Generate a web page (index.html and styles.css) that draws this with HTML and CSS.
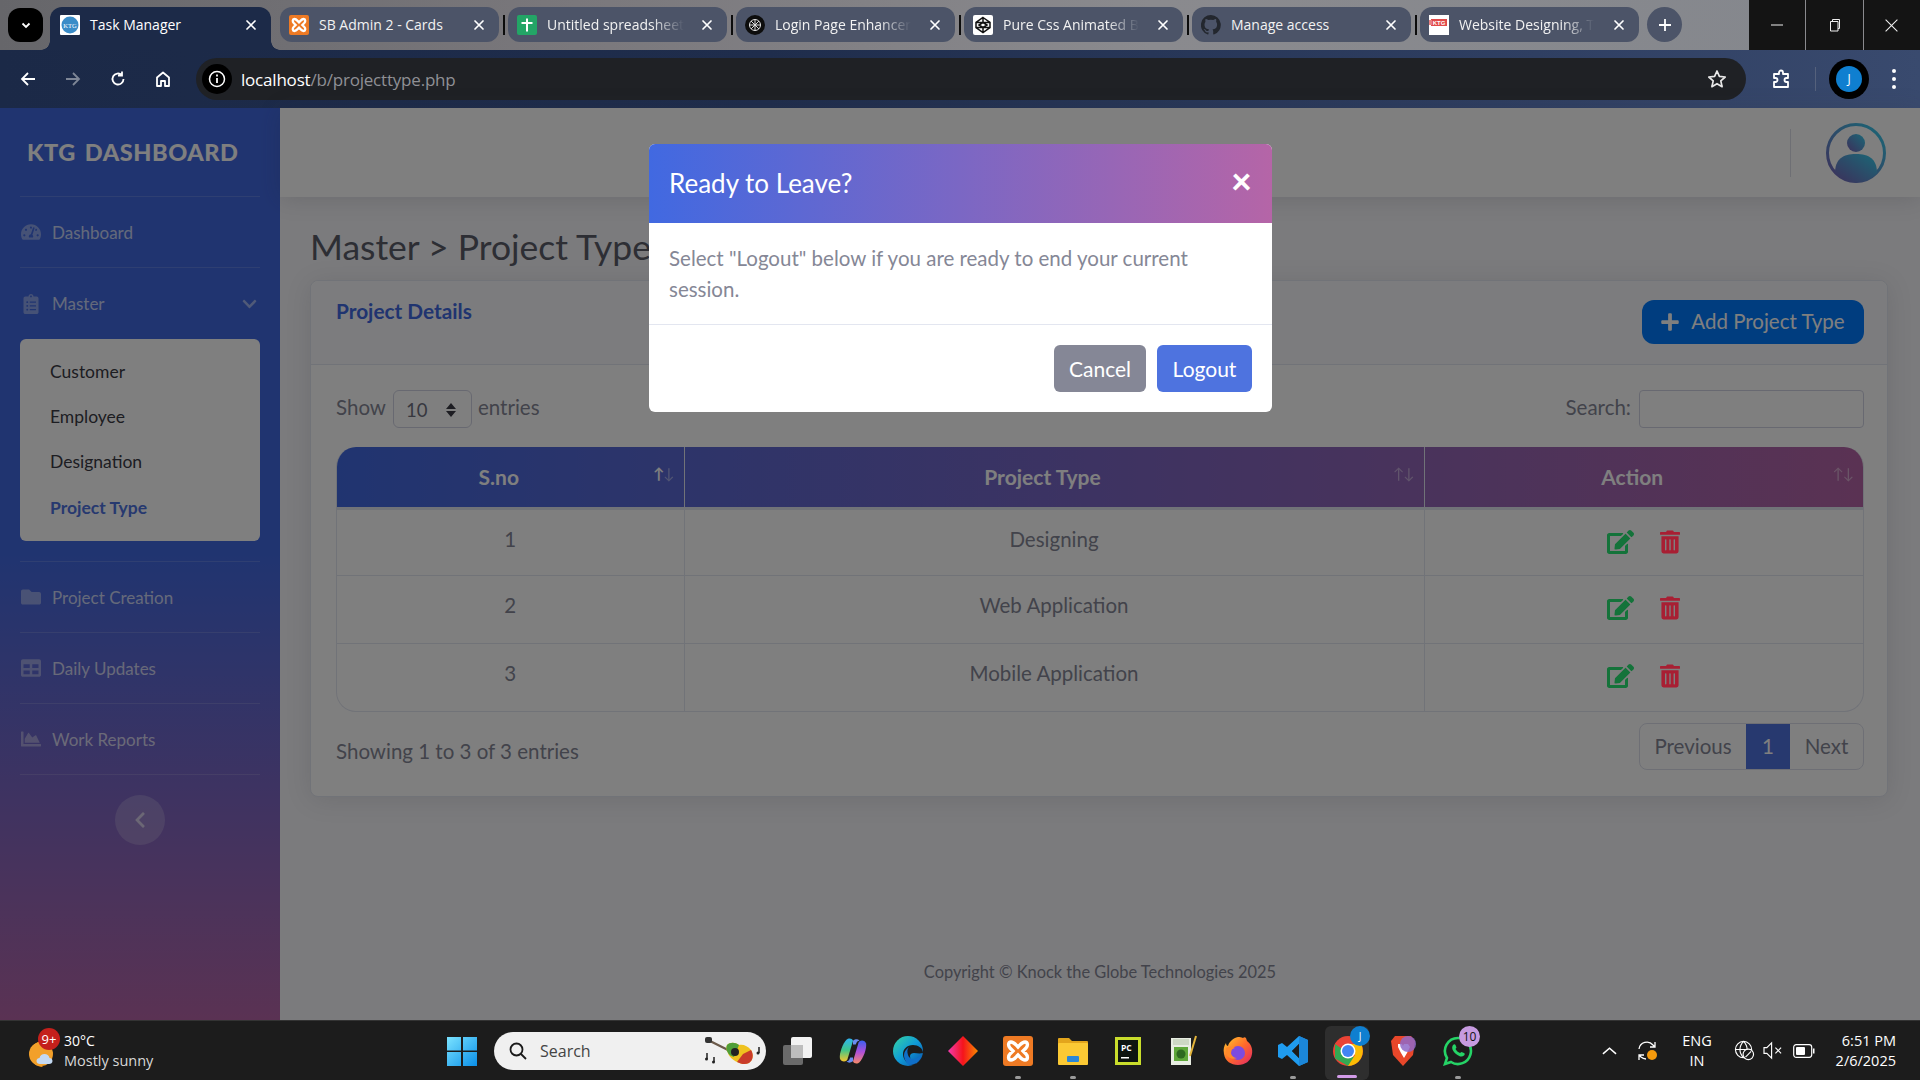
FILE: index.html
```html
<!DOCTYPE html>
<html lang="en">
<head>
<meta charset="utf-8">
<title>Task Manager</title>
<link rel="stylesheet" href="styles.css">
</head>
<body>
<svg class="defs" width="0" height="0" aria-hidden="true">
  <defs>
    <linearGradient id="gAvatar" x1="1" y1="0" x2="0" y2="1"><stop offset="0" stop-color="#35d0ee"/><stop offset="1" stop-color="#7a5fb5"/></linearGradient>
    <linearGradient id="gWin" x1="0" y1="0" x2="1" y2="1"><stop offset="0" stop-color="#7be3ff"/><stop offset="1" stop-color="#0a8fe8"/></linearGradient>
    <linearGradient id="gEdge" x1="0" y1="0" x2="1" y2="1"><stop offset="0" stop-color="#37d6a0"/><stop offset=".5" stop-color="#0f9bd8"/><stop offset="1" stop-color="#0b4fa8"/></linearGradient>
    <linearGradient id="gDia" x1="0" y1="0" x2="1" y2="0"><stop offset="0" stop-color="#f43bb0"/><stop offset=".5" stop-color="#f5141c"/><stop offset="1" stop-color="#f88a00"/></linearGradient>
    <linearGradient id="gCopL" x1="0" y1="0" x2="0" y2="1"><stop offset="0" stop-color="#2fb4f0"/><stop offset=".5" stop-color="#3fc58a"/><stop offset="1" stop-color="#f5c52c"/></linearGradient>
    <linearGradient id="gCopR" x1="0" y1="0" x2="0" y2="1"><stop offset="0" stop-color="#3b5ff0"/><stop offset=".5" stop-color="#b04fd8"/><stop offset="1" stop-color="#f58a6a"/></linearGradient>
    <linearGradient id="gFire" x1="0" y1="0" x2="1" y2="1"><stop offset="0" stop-color="#ffcb2e"/><stop offset=".5" stop-color="#ff6a2a"/><stop offset="1" stop-color="#e0246a"/></linearGradient>
    <symbol id="i-plus" viewBox="0 0 448 512"><path d="M416 208H272V64c0-17.67-14.33-32-32-32h-32c-17.67 0-32 14.33-32 32v144H32c-17.67 0-32 14.33-32 32v32c0 17.67 14.33 32 32 32h144v144c0 17.67 14.33 32 32 32h32c17.67 0 32-14.33 32-32V304h144c17.67 0 32-14.33 32-32v-32c0-17.67-14.33-32-32-32z"/></symbol>
    <symbol id="i-chev-d" viewBox="0 0 448 512"><path d="M207.029 381.476L12.686 187.132c-9.373-9.373-9.373-24.569 0-33.941l22.667-22.667c9.357-9.357 24.522-9.375 33.901-.04L224 284.505l154.745-154.021c9.379-9.335 24.544-9.317 33.901.04l22.667 22.667c9.373 9.373 9.373 24.569 0 33.941L240.971 381.476c-9.373 9.372-24.569 9.372-33.942 0z"/></symbol>
    <symbol id="i-chev-l" viewBox="0 0 320 512"><path d="M34.52 239.03L228.87 44.69c9.37-9.37 24.57-9.37 33.94 0l22.67 22.67c9.36 9.36 9.37 24.52.04 33.9L131.49 256l154.02 154.75c9.34 9.38 9.32 24.54-.04 33.9l-22.67 22.67c-9.37 9.37-24.57 9.37-33.94 0L34.52 272.97c-9.37-9.37-9.37-24.57 0-33.94z"/></symbol>
    <symbol id="i-folder" viewBox="0 0 512 512"><path d="M464 128H272l-64-64H48C21.49 64 0 85.49 0 112v288c0 26.51 21.49 48 48 48h416c26.51 0 48-21.49 48-48V176c0-26.51-21.49-48-48-48z"/></symbol>
    <symbol id="i-table" viewBox="0 0 512 512"><path fill-rule="evenodd" d="M464 32H48C21.49 32 0 53.49 0 80v352c0 26.51 21.49 48 48 48h416c26.51 0 48-21.49 48-48V80c0-26.51-21.49-48-48-48zM224 416H64v-96h160v96zm0-160H64v-96h160v96zm224 160H288v-96h160v96zm0-160H288v-96h160v96z"/></symbol>
    <symbol id="i-area" viewBox="0 0 512 512"><path d="M500 384c6.6 0 12 5.4 12 12v40c0 6.6-5.4 12-12 12H12c-6.6 0-12-5.4-12-12V76c0-6.6 5.4-12 12-12h40c6.6 0 12 5.4 12 12v308h436zM372.7 159.5L288 216l-85.3-113.7c-5.1-6.8-15.5-6.3-19.9 1L96 248v104h384l-89.9-187.8c-3.2-6.5-11.4-8.7-17.4-4.7z"/></symbol>
    <symbol id="i-gauge" viewBox="0 0 576 512"><path d="M288 32C128.94 32 0 160.94 0 320c0 52.8 14.25 102.26 39.06 144.8 5.61 9.62 16.3 15.2 27.44 15.2h443c11.14 0 21.83-5.58 27.44-15.2C561.75 422.26 576 372.8 576 320c0-159.06-128.94-288-288-288zm0 64c14.71 0 26.58 10.13 30.32 23.65-1.11 2.26-2.64 4.23-3.45 6.67l-9.22 27.67c-5.13 3.49-10.97 6.01-17.64 6.01-17.67 0-32-14.33-32-32S270.33 96 288 96zM96 384c-17.67 0-32-14.33-32-32s14.33-32 32-32 32 14.33 32 32-14.33 32-32 32zm48-160c-17.67 0-32-14.33-32-32s14.33-32 32-32 32 14.33 32 32-14.33 32-32 32zm246.77-72.41l-61.33 184C343.13 347.33 352 364.54 352 384c0 11.72-3.38 22.55-8.88 32H232.88c-5.5-9.45-8.88-20.28-8.88-32 0-33.94 26.5-61.43 59.9-63.59l61.34-184.01c4.17-12.56 17.73-19.45 30.36-15.17 12.57 4.19 19.35 17.79 15.17 30.36zm14.66 57.2l15.52-46.55c3.47-1.29 7.13-2.23 11.05-2.23 17.67 0 32 14.33 32 32s-14.33 32-32 32c-11.38-.01-20.89-6.28-26.57-15.22zM480 384c-17.67 0-32-14.33-32-32s14.33-32 32-32 32 14.33 32 32-14.33 32-32 32z"/></symbol>
    <symbol id="i-clip" viewBox="0 0 384 512"><path d="M336 64h-80c0-35.3-28.7-64-64-64s-64 28.7-64 64H48C21.5 64 0 85.5 0 112v352c0 26.5 21.5 48 48 48h288c26.5 0 48-21.5 48-48V112c0-26.5-21.5-48-48-48zM96 424c-13.3 0-24-10.7-24-24s10.7-24 24-24 24 10.7 24 24-10.7 24-24 24zm0-96c-13.3 0-24-10.7-24-24s10.7-24 24-24 24 10.7 24 24-10.7 24-24 24zm0-96c-13.3 0-24-10.7-24-24s10.7-24 24-24 24 10.7 24 24-10.7 24-24 24zm96-192c13.3 0 24 10.7 24 24s-10.7 24-24 24-24-10.7-24-24 10.7-24 24-24zm128 368c0 4.4-3.6 8-8 8H168c-4.4 0-8-3.6-8-8v-16c0-4.4 3.6-8 8-8h144c4.4 0 8 3.6 8 8v16zm0-96c0 4.4-3.6 8-8 8H168c-4.4 0-8-3.6-8-8v-16c0-4.4 3.6-8 8-8h144c4.4 0 8 3.6 8 8v16zm0-96c0 4.4-3.6 8-8 8H168c-4.4 0-8-3.6-8-8v-16c0-4.4 3.6-8 8-8h144c4.4 0 8 3.6 8 8v16z"/></symbol>
    <symbol id="i-edit" viewBox="0 0 576 512"><path d="M402.6 83.2l90.2 90.2c3.8 3.8 3.8 10 0 13.8L274.4 405.6l-92.8 10.3c-12.4 1.4-22.9-9.1-21.5-21.5l10.3-92.8L388.8 83.2c3.8-3.8 10-3.8 13.8 0zm162-22.9l-48.8-48.8c-15.2-15.2-39.9-15.2-55.2 0l-35.4 35.4c-3.8 3.8-3.8 10 0 13.8l90.2 90.2c3.8 3.8 10 3.8 13.8 0l35.4-35.4c15.2-15.3 15.2-40 0-55.2zM384 346.2V448H64V128h229.8c3.2 0 6.2-1.3 8.5-3.5l40-40c7.6-7.6 2.2-20.5-8.5-20.5H48C21.5 64 0 85.5 0 112v352c0 26.5 21.5 48 48 48h352c26.5 0 48-21.5 48-48V306.2c0-10.7-12.9-16-20.5-8.5l-40 40c-2.2 2.3-3.5 5.3-3.5 8.5z"/></symbol>
    <symbol id="i-trash" viewBox="0 0 448 512"><path d="M32 464a48 48 0 0 0 48 48h288a48 48 0 0 0 48-48V128H32zm272-256a16 16 0 0 1 32 0v224a16 16 0 0 1-32 0zm-96 0a16 16 0 0 1 32 0v224a16 16 0 0 1-32 0zm-96 0a16 16 0 0 1 32 0v224a16 16 0 0 1-32 0zM432 32H312l-9.4-18.7A24 24 0 0 0 281.1 0H166.8a23.72 23.72 0 0 0-21.4 13.3L136 32H16A16 16 0 0 0 0 48v32a16 16 0 0 0 16 16h416a16 16 0 0 0 16-16V48a16 16 0 0 0-16-16z"/></symbol>
    <symbol id="i-x" viewBox="0 0 12 12"><path d="M2 2l8 8M10 2l-8 8" fill="none" stroke="currentColor" stroke-width="1.7" stroke-linecap="round"/></symbol>
    <symbol id="f-ktg" viewBox="0 0 20 20"><rect width="20" height="20" rx="1" fill="#fff"/><circle cx="10" cy="10" r="8.5" fill="#3a8cc8"/><text x="10" y="12.5" font-size="6.5" font-family="Liberation Serif" fill="#fff" text-anchor="middle">KTG</text></symbol>
    <symbol id="f-xampp" viewBox="0 0 30 30"><rect width="30" height="30" rx="3" fill="#ee7a24"/><path d="M8 6c3 0 4 2 7 5 3-3 4-5 7-5 3 0 3 4 1 6l-3 3 3 3c2 2 2 6-1 6-3 0-4-2-7-5-3 3-4 5-7 5-3 0-3-4-1-6l3-3-3-3C5 10 5 6 8 6z" fill="none" stroke="#fff" stroke-width="3.4"/></symbol>
    <symbol id="f-sheet" viewBox="0 0 20 20"><rect width="20" height="20" rx="2" fill="#23a566"/><path d="M10 3.5v13M4.5 8h11" stroke="#fff" stroke-width="2"/></symbol>
    <symbol id="f-gpt" viewBox="0 0 20 20"><circle cx="10" cy="10" r="10" fill="#0d0d0d"/><g fill="none" stroke="#ddd" stroke-width="1"><circle cx="10" cy="10" r="5.5"/><path d="M6 6l8 8M14 6l-8 8M10 4v12M4 10h12"/></g></symbol>
    <symbol id="f-pen" viewBox="0 0 20 20"><rect width="20" height="20" rx="2" fill="#fff"/><path d="M10 2.5l7 5v5l-7 5-7-5v-5zM10 2.5v5l-7 0M10 7.5l7 0M10 12.5v5M3 12.5h14M10 7.5l-4 2.5 4 2.5 4-2.5z" fill="none" stroke="#111" stroke-width="1.5"/></symbol>
    <symbol id="f-git" viewBox="0 0 20 20"><path d="M10 0a10 10 0 0 0-3.2 19.5c.5.1.7-.2.7-.5v-1.7c-2.8.6-3.4-1.3-3.4-1.3-.5-1.2-1.100-1.500-1.100-1.500-.9-.6.1-.6.1-.6 1 .1 1.500 1 1.500 1 .9 1.500 2.300 1.100 2.900.8.1-.6.3-1.100.6-1.300-2.200-.3-4.600-1.100-4.600-4.900 0-1.100.4-2 1-2.700-.1-.3-.4-1.300.1-2.700 0 0 .8-.3 2.700 1a9.400 9.400 0 0 1 5 0c1.900-1.300 2.700-1 2.700-1 .5 1.400.2 2.400.1 2.700.6.7 1 1.600 1 2.700 0 3.800-2.300 4.600-4.600 4.900.4.3.7.9.7 1.900V19c0 .3.2.6.7.5A10 10 0 0 0 10 0z" fill="#23272e"/></symbol>
    <symbol id="f-red" viewBox="0 0 20 20"><rect width="20" height="20" fill="#fff"/><rect x="2" y="4" width="16" height="7" fill="#e14a4a"/><text x="10" y="10" font-size="6" font-family="Liberation Sans" font-weight="700" fill="#fff" text-anchor="middle">KTG</text><rect x="0" y="5" width="3" height="5" fill="#e98080"/></symbol>
  </defs>
</svg>

<div class="window">
  <header class="tabstrip">
    <button class="tabsearch"><svg viewBox="0 0 12 12" width="12" height="12"><path d="M2.5 4.5L6 8l3.500-3.500" fill="none" stroke="#fff" stroke-width="1.800"/></svg></button>
    <div class="tabs">
      <div class="tab tab-active"><svg class="fav"><use href="#f-ktg"/></svg><span class="tab-title">Task Manager</span><svg class="tab-x"><use href="#i-x"/></svg></div>
      <div class="tab"><svg class="fav"><use href="#f-xampp"/></svg><span class="tab-title">SB Admin 2 - Cards</span><svg class="tab-x"><use href="#i-x"/></svg></div>
      <div class="tab"><svg class="fav"><use href="#f-sheet"/></svg><span class="tab-title tab-fade">Untitled spreadsheet</span><svg class="tab-x"><use href="#i-x"/></svg></div>
      <div class="tab"><svg class="fav"><use href="#f-gpt"/></svg><span class="tab-title tab-fade">Login Page Enhancer</span><svg class="tab-x"><use href="#i-x"/></svg></div>
      <div class="tab"><svg class="fav"><use href="#f-pen"/></svg><span class="tab-title tab-fade">Pure Css Animated B</span><svg class="tab-x"><use href="#i-x"/></svg></div>
      <div class="tab"><svg class="fav"><use href="#f-git"/></svg><span class="tab-title">Manage access</span><svg class="tab-x"><use href="#i-x"/></svg></div>
      <div class="tab"><svg class="fav"><use href="#f-red"/></svg><span class="tab-title tab-fade">Website Designing, T</span><svg class="tab-x"><use href="#i-x"/></svg></div>
    </div>
    <button class="newtab"><svg viewBox="0 0 14 14" width="14" height="14"><path d="M7 1v12M1 7h12" stroke="#fff" stroke-width="1.800"/></svg></button>
    <div class="winctl">
      <span class="wc"><svg viewBox="0 0 14 14" width="14" height="14"><path d="M1 7h12" stroke="#eee" stroke-width="1"/></svg></span>
      <span class="wc wc-mid"><svg viewBox="0 0 14 14" width="14" height="14"><path d="M3.5 3.5h7.500v9.500H3.500zM5.500 3.500V1.500h7v9h-1.500" fill="none" stroke="#eee" stroke-width="1"/></svg></span>
      <span class="wc"><svg viewBox="0 0 14 14" width="15" height="15"><path d="M1.5 1.500l11 11M12.500 1.500l-11 11" stroke="#eee" stroke-width="1"/></svg></span>
    </div>
  </header>

  <nav class="toolbar">
    <span class="tb-btn"><svg viewBox="0 0 18 18" width="18" height="18"><path d="M16 9H3M9 3L3 9l6 6" fill="none" stroke="#fff" stroke-width="1.800"/></svg></span>
    <span class="tb-btn"><svg viewBox="0 0 18 18" width="18" height="18"><path d="M2 9h13M9 3l6 6-6 6" fill="none" stroke="#7e8696" stroke-width="1.800"/></svg></span>
    <span class="tb-btn"><svg viewBox="0 0 18 18" width="18" height="18"><path d="M14.5 9a5.500 5.500 0 1 1-1.700-4M13 1.500V5.500H9" fill="none" stroke="#fff" stroke-width="1.800"/></svg></span>
    <span class="tb-btn"><svg viewBox="0 0 18 18" width="18" height="18"><path d="M3 16V7.500L9 2.500l6 5V16h-4v-5H7v5z" fill="none" stroke="#fff" stroke-width="1.800" stroke-linejoin="round"/></svg></span>
    <div class="omnibox">
      <span class="site-info"><svg viewBox="0 0 18 18" width="18" height="18"><circle cx="9" cy="9" r="7.500" fill="none" stroke="#fff" stroke-width="1.500"/><path d="M9 8v5M9 4.500v2" stroke="#fff" stroke-width="1.800"/></svg></span>
      <span class="url"><span class="url-host">localhost</span>/b/projecttype.php</span>
      <svg class="star" viewBox="0 0 20 20" width="20" height="20"><path d="M10 2l2.400 5.400 5.800.6-4.400 3.900 1.300 5.800L10 14.700l-5.100 3 1.300-5.800L1.800 8l5.800-.6z" fill="none" stroke="#e8e8e8" stroke-width="1.700" stroke-linejoin="round"/></svg>
    </div>
    <span class="tb-ext"><svg viewBox="0 0 20 20" width="20" height="20"><path d="M8 3.500a2 2 0 0 1 4 0V5h5v4h-1.500a2 2 0 0 0 0 4H17v5H3v-5h1.500a2 2 0 0 0 0-4H3V5h5z" fill="none" stroke="#fff" stroke-width="1.800" stroke-linejoin="round"/></svg></span>
    <span class="tb-sep"></span>
    <span class="profile"><span class="profile-in">J</span></span>
    <span class="tb-dots"><i></i><i></i><i></i></span>
  </nav>

  <div class="app">
    <aside class="sidebar">
      <div class="brand">KTG DASHBOARD</div>
      <ul class="nav">
        <li class="nav-item"><svg class="nav-ic"><use href="#i-gauge"/></svg><span>Dashboard</span></li>
        <li class="nav-item nav-open"><svg class="nav-ic"><use href="#i-clip"/></svg><span>Master</span><svg class="nav-chev"><use href="#i-chev-d"/></svg></li>
        <li class="submenu">
          <a>Customer</a><a>Employee</a><a>Designation</a><a class="sub-active">Project Type</a>
        </li>
        <li class="nav-item"><svg class="nav-ic"><use href="#i-folder"/></svg><span>Project Creation</span></li>
        <li class="nav-item"><svg class="nav-ic"><use href="#i-table"/></svg><span>Daily Updates</span></li>
        <li class="nav-item"><svg class="nav-ic"><use href="#i-area"/></svg><span>Work Reports</span></li>
      </ul>
      <button class="collapse"><svg width="12" height="18"><use href="#i-chev-l"/></svg></button>
    </aside>

    <main class="main">
      <div class="topbar">
        <span class="topbar-sep"></span>
        <svg class="avatar" viewBox="0 0 60 60" width="60" height="60">
          <circle cx="30" cy="30" r="28.5" fill="none" stroke="url(#gAvatar)" stroke-width="3"/>
          <circle cx="30" cy="20" r="9" fill="url(#gAvatar)"/>
          <path d="M9 50c0-14 8-19 21-19s21 5 21 19a28 28 0 0 1-42 0z" fill="url(#gAvatar)"/>
        </svg>
      </div>
      <section class="content">
        <h1 class="page-title">Master &gt; Project Type</h1>
        <div class="card">
          <div class="card-head">
            <h2 class="card-title">Project Details</h2>
            <button class="btn-add"><svg width="18" height="20"><use href="#i-plus"/></svg><span>Add Project Type</span></button>
          </div>
          <div class="card-body">
            <div class="dt-top">
              <div class="dt-len">Show <span class="dt-select"><span>10</span><svg viewBox="0 0 10 14" width="10" height="14"><path d="M5 0l5 6H0zM5 14L0 8h10z"/></svg></span> entries</div>
              <label class="dt-search">Search: <input type="text"></label>
            </div>
            <div class="table-wrap">
              <table class="dt">
                <colgroup><col class="c1"><col class="c2"><col class="c3"></colgroup>
                <thead>
                  <tr>
                    <th>S.no<span class="sort sort-on"><b>↑</b><i>↓</i></span></th>
                    <th>Project Type<span class="sort"><i>↑</i><i>↓</i></span></th>
                    <th>Action<span class="sort"><i>↑</i><i>↓</i></span></th>
                  </tr>
                </thead>
                <tbody>
                  <tr><td>1</td><td>Designing</td><td class="act"><svg class="ic-edit"><use href="#i-edit"/></svg><svg class="ic-trash"><use href="#i-trash"/></svg></td></tr>
                  <tr><td>2</td><td>Web Application</td><td class="act"><svg class="ic-edit"><use href="#i-edit"/></svg><svg class="ic-trash"><use href="#i-trash"/></svg></td></tr>
                  <tr><td>3</td><td>Mobile Application</td><td class="act"><svg class="ic-edit"><use href="#i-edit"/></svg><svg class="ic-trash"><use href="#i-trash"/></svg></td></tr>
                </tbody>
              </table>
            </div>
            <div class="dt-bottom">
              <div class="dt-info">Showing 1 to 3 of 3 entries</div>
              <div class="pager"><a class="pg-prev">Previous</a><a class="pg-num">1</a><a class="pg-next">Next</a></div>
            </div>
          </div>
        </div>
      </section>
      <footer class="footer">Copyright © Knock the Globe Technologies 2025</footer>
    </main>

    <div class="backdrop"></div>
    <div class="modal">
      <div class="modal-head"><h3>Ready to Leave?</h3><span class="modal-x">×</span></div>
      <div class="modal-body">Select "Logout" below if you are ready to end your current session.</div>
      <div class="modal-foot"><button class="btn-cancel">Cancel</button><button class="btn-logout">Logout</button></div>
    </div>
  </div>

  <footer class="taskbar">
    <div class="weather">
      <svg class="wx" viewBox="0 0 30 28" width="30" height="28"><path d="M16 1a13 13 0 1 0 0 26 13 13 0 0 1-4-14 13 13 0 0 1 8-11z" fill="#f59a1c"/><circle cx="14" cy="14" r="12" fill="#f2a02a"/><path d="M13 24c-2 0-3.500-1-3.500-3s1.500-3 3-3c.5-2.500 2.500-4 5-4s4.500 1.500 5 4c1.500 0 3 1 3 3s-1.500 3-3.500 3z" fill="#c4d9f2"/></svg>
      <span class="wx-badge">9+</span>
      <div class="wx-text"><span class="wx-temp">30°C</span><span class="wx-desc">Mostly sunny</span></div>
    </div>
    <svg class="winlogo" viewBox="0 0 30 30" width="30" height="30"><path d="M0 1h14v13.500H0zM16 1h14v13.500H16zM0 16h14v14H0zM16 16h14v14H16z" fill="url(#gWin)"/></svg>
    <div class="tsearch">
      <svg viewBox="0 0 18 18" width="18" height="18"><circle cx="7.5" cy="7.5" r="6" fill="none" stroke="#1a1a1a" stroke-width="1.800"/><path d="M12 12l5 5" stroke="#1a1a1a" stroke-width="1.800"/></svg>
      <span>Search</span>
      <svg class="guitar" viewBox="0 0 56 28" width="56" height="28">
        <path d="M3 3l24 12" stroke="#6b5a4a" stroke-width="2.200"/><rect x="0" y="0" width="7" height="6" rx="2" fill="#333"/>
        <path d="M22 8c3-3 8-3 12 0 4-1 9 1 12 5 3 5 2 10-2 13-4 2-8 1-12-1-4-2-8-5-9-9-2-3-2-6-1-8z" fill="#efc21f"/>
        <path d="M22 8c3-3 8-3 12 0l-5 12c-3-1-5-2-6-4-2-3-2-6-1-8z" fill="#4f9e38"/>
        <path d="M32 25c4 2 8 3 12 1 4-3 5-8 2-13l-8 4z" fill="#c93b2a"/>
        <circle cx="30" cy="15" r="4" fill="#222"/>
        <path d="M2 16v6M9 20v5" stroke="#222" stroke-width="1.500"/><circle cx="1.500" cy="22" r="1.500" fill="#222"/><circle cx="8.500" cy="25" r="1.500" fill="#222"/>
        <path d="M54 10v6" stroke="#222" stroke-width="1.500"/><circle cx="53" cy="16" r="1.500" fill="#222"/>
      </svg>
    </div>
    <div class="apps">
      <span class="app-ic"><svg viewBox="0 0 30 30" width="30" height="30"><rect x="0" y="9" width="20" height="20" rx="2" fill="#6a6a6a"/><rect x="8" y="1" width="21" height="21" rx="2" fill="#f2f2f2"/><rect x="8" y="9" width="12" height="13" fill="#bdbdbd"/></svg></span>
      <span class="app-ic"><svg viewBox="0 0 30 30" width="28" height="30"><path d="M8 3c2-2 6-2 7 1l-6 20c-1 3-7 3-8-1C0 18 4 7 8 3z" fill="url(#gCopL)"/><path d="M22 27c-2 2-6 2-7-1l6-20c1-3 7-3 8 1 1 5-3 16-7 20z" fill="url(#gCopR)"/><path d="M15 4c3-2 5-2 7 0-2 0-3 1-4 4l-3 0zM15 26c-3 2-5 2-7 0 2 0 3-1 4-4l3 0z" fill="#6a8cf0"/></svg></span>
      <span class="app-ic"><svg viewBox="0 0 30 30" width="30" height="30"><circle cx="15" cy="15" r="15" fill="url(#gEdge)"/><path d="M30 17c0-5-5-8-10-8-6 0-10 4-10 9 0 6 5 11 11 11 3-1 2-2 0-3-3-1-4-3-4-6 0-2 2-3 4-3 3 0 5 1 9 0z" fill="#1c1c1c"/><path d="M28 20c-1 5-6 9-11 9-3-1-6-5-6-10 0-3 2-6 5-8-2 2-2 5-1 8 1 4 6 6 13 1z" fill="#0f6fc8"/></svg></span>
      <span class="app-ic"><svg viewBox="0 0 30 30" width="30" height="30"><path d="M15 0l15 15-15 15L0 15z" fill="url(#gDia)"/></svg></span>
      <span class="app-ic app-run"><svg width="30" height="30"><use href="#f-xampp"/></svg></span>
      <span class="app-ic app-run"><svg viewBox="0 0 30 30" width="30" height="30"><path d="M0 3a1 1 0 0 1 1-1h10l3 3h15a1 1 0 0 1 1 1v3H0z" fill="#e3a51c"/><rect y="7" width="30" height="22" rx="1" fill="#fbc934"/><rect x="9" y="20" width="12" height="6" rx="1" fill="#2a87d8"/></svg></span>
      <span class="app-ic"><svg viewBox="0 0 26 30" width="26" height="30"><rect width="26" height="28" y="1" fill="#c9dd2c"/><rect x="3" y="4" width="20" height="22" fill="#0e1410"/><text class="pc" x="6" y="15">PC</text><rect x="6" y="21" width="8" height="1.5" fill="#fff"/></svg></span>
      <span class="app-ic"><svg viewBox="0 0 28 32" width="28" height="32"><path d="M2 3h20v27H2z" fill="#e8ede2"/><path d="M5 12h14v14H5z" fill="#5fa83a"/><circle cx="12" cy="19" r="4.5" fill="#2e6a20"/><path d="M4 4h16v6H4z" fill="#cdd8c4"/><path d="M21 21l6-20" stroke="#e4b53c" stroke-width="2"/></svg></span>
      <span class="app-ic"><svg viewBox="0 0 30 30" width="30" height="30"><path d="M15 1c2 0 3 0 5 1 1-1 2-1 3 0l1 3c4 3 6 8 5 13-1 7-7 11-14 11S2 25 1 18C0 13 1 10 3 7c0 2 1 3 2 3 1-4 5-8 10-9z" fill="url(#gFire)"/><circle cx="15" cy="17" r="7" fill="#7d4be0"/><path d="M3 12c3-2 6-2 9 0-4 1-5 3-4 6 1 2 3 4 6 4-4 2-9 0-11-4z" fill="#ff8a2a"/></svg></span>
      <span class="app-ic app-run"><svg viewBox="0 0 30 30" width="30" height="30"><path d="M21 0l9 4v22l-9 4-12-11-5 4-4-2V9l4-2 5 4zM21 8l-7 7 7 7z" fill="#1f9cf0"/><path d="M21 0l9 4v22l-9 4z" fill="#1b86d8"/><path d="M21 8l-7 7 7 7z" fill="#1c1c1c"/></svg></span>
      <span class="app-ic app-chrome">
        <svg viewBox="0 0 30 30" width="30" height="30"><circle cx="15" cy="15" r="15" fill="#ea4335"/><path d="M2 8v14.5L15 30l7-8z" fill="#34a853"/><path d="M15 8h13.100A15 15 0 0 1 15 30l7-11z" fill="#fbbc04"/><circle cx="15" cy="15" r="7.500" fill="#fff"/><circle cx="15" cy="15" r="6" fill="#4285f4"/></svg>
        <span class="chrome-j">J</span>
      </span>
      <span class="app-ic"><svg viewBox="0 0 28 32" width="28" height="32"><path d="M6 1h16l4 5-2 14-10 11L4 20 2 6z" fill="#e8472a"/><path d="M9 9h4l1 2 1-2h4l2 3-3 6-3 5-3-5-3-6z" fill="#fff"/><circle cx="19" cy="9" r="8" fill="#8f6ac9" opacity=".85"/></svg></span>
      <span class="app-ic app-run app-wa"><svg viewBox="0 0 30 30" width="30" height="30"><path d="M15 2a13 13 0 0 0-11 20L2 28l6-2a13 13 0 1 0 7-24z" fill="none" stroke="#25d366" stroke-width="2.6"/><path d="M10 9c1-1 2-1 2.500 0l1 2.500-1 1.500c1 2 2.500 3 4.500 4l1.500-1 2.500 1c1 .5 1 1.500 0 2.500-2 2-5 1-8-1.500S8 12 10 9z" fill="#25d366"/></svg><span class="wa-badge">10</span></span>
    </div>
    <div class="tray">
      <span class="tr-chev"><svg viewBox="0 0 16 10" width="15" height="10"><path d="M1 8l7-6 7 6" fill="none" stroke="#fff" stroke-width="1.600"/></svg></span>
      <span class="tr-sync"><svg viewBox="0 0 22 22" width="22" height="22"><path d="M2 9a8 8 0 0 1 14-4l2 2M18 2v5h-5M2 15l2 2a8 8 0 0 0 5 2M2 20v-5h5" fill="none" stroke="#fff" stroke-width="1.300"/><circle cx="15" cy="15" r="5" fill="#f59a0c"/></svg></span>
      <span class="tr-lang"><span>ENG</span><span>IN</span></span>
      <span class="tr-ic"><svg viewBox="0 0 22 22" width="21" height="21"><circle cx="10" cy="10" r="8.500" fill="none" stroke="#fff" stroke-width="1.200"/><path d="M1.500 10h17M10 1.500c-5 5-5 12 0 17M10 1.500c5 5 5 12 0 17" fill="none" stroke="#fff" stroke-width="1.200"/><circle cx="15" cy="15" r="5.500" fill="#1c1c1c" stroke="#fff" stroke-width="1.200"/><path d="M12 18l6-6" stroke="#fff" stroke-width="1.200"/></svg></span>
      <span class="tr-ic"><svg viewBox="0 0 22 20" width="21" height="19"><path d="M1 7h3l5-5v16l-5-5H1z" fill="none" stroke="#fff" stroke-width="1.200"/><path d="M13 7l6 6M19 7l-6 6" stroke="#fff" stroke-width="1.200"/></svg></span>
      <span class="tr-ic tr-batt"><svg viewBox="0 0 22 14" width="22" height="14"><rect x=".7" y=".7" width="18" height="12.6" rx="2.500" fill="none" stroke="#fff" stroke-width="1.200"/><rect x="3" y="3" width="9" height="8" rx="1" fill="#fff"/><rect x="20" y="4.500" width="1.500" height="5" fill="#fff"/></svg></span>
      <span class="tr-time"><span>6:51 PM</span><span>2/6/2025</span></span>
    </div>
  </footer>
</div>
</body>
</html>
```

FILE: styles.css
```css
* { box-sizing: border-box; }
html, body { margin: 0; padding: 0; height: 100%; overflow: hidden; }
body { font-family: "Lato", "Noto Sans", sans-serif; background: #000; }
button { font-family: inherit; border: 0; padding: 0; cursor: pointer; }
h1, h2, h3 { margin: 0; font-weight: 400; }
ul { list-style: none; margin: 0; padding: 0; }
.defs { position: absolute; }
.window { display: flex; flex-direction: column; width: 1920px; height: 1080px; }

/* browser tab strip */
.tabstrip { height: 50px; flex: none; display: flex; align-items: flex-start; padding-left: 8px; background: linear-gradient(90deg, #66666a 0, #7a787c 30%, #8a8a8e 60%, #84878d 100%); font-family: "Open Sans", sans-serif; }
.tabsearch { width: 35px; height: 34px; margin-top: 8px; background: #000; border-radius: 12px; display: flex; align-items: center; justify-content: center; }
.tabs { display: flex; gap: 9px; margin-left: 7px; }
.tab { position: relative; width: 219px; height: 35px; margin-top: 7px; background: #4c5468; border-radius: 12px; display: flex; align-items: center; padding: 0 14px 0 9px; color: #f2f2f2; font-size: 14px; }
.tab + .tab::before { content: ""; position: absolute; left: -5px; top: 8px; width: 2px; height: 20px; background: #0c0c0c; }
.tab-active + .tab::before { display: none; }
.tab-active { width: 221px; height: 43px; background: #1c2a48; border-radius: 12px 12px 0 0; padding: 0 14px 8px 10px; color: #fff; }
.tab-active::before, .tab-active::after { content: ""; position: absolute; bottom: 0; width: 9px; height: 9px; }
.tab-active::before { left: -9px; background: radial-gradient(circle at 0 0, transparent 8.5px, #1c2a48 9px); }
.tab-active::after { right: -9px; background: radial-gradient(circle at 100% 0, transparent 8.5px, #1c2a48 9px); }
.fav { width: 20px; height: 20px; flex: none; margin-right: 10px; }
.tab-title { flex: none; white-space: nowrap; }
.tab-fade { -webkit-mask-image: linear-gradient(90deg, #000 calc(100% - 32px), transparent 100%); mask-image: linear-gradient(90deg, #000 calc(100% - 32px), transparent 100%); }
.tab-x { width: 12px; height: 12px; flex: none; margin-left: auto; color: #fff; }
.newtab { width: 35px; height: 35px; margin: 7px 0 0 8px; background: #4c5468; border-radius: 50%; display: flex; align-items: center; justify-content: center; }
.winctl { margin-left: auto; width: 171px; height: 50px; background: #141414; display: flex; }
.wc { flex: 1; display: flex; align-items: center; justify-content: center; }
.wc-mid { border-left: 1px solid #8a8a8e; border-right: 1px solid #8a8a8e; }

/* browser toolbar */
.toolbar { height: 58px; flex: none; display: flex; align-items: center; background: linear-gradient(90deg, #1b2947 0, #1f2d4c 40%, #2f3f62 80%, #394a6e 100%); padding-left: 5px; }
.tb-btn { width: 45px; height: 40px; display: flex; align-items: center; justify-content: center; }
.omnibox { flex: none; width: 1550px; height: 42px; margin-left: 11px; background: #1f2125; border-radius: 21px; display: flex; align-items: center; padding: 0 19px 0 6px; }
.site-info { width: 30px; height: 30px; background: #000; border-radius: 50%; display: flex; align-items: center; justify-content: center; }
.url { margin-left: 9px; color: #8f9095; font: 17px "Open Sans", sans-serif; letter-spacing: -.2px; }
.url-host { color: #fff; }
.star { margin-left: auto; }
.tb-ext { width: 20px; margin-left: 25px; display: flex; }
.tb-sep { width: 1px; height: 24px; background: #55617c; margin-left: 24px; }
.profile { width: 40px; height: 40px; margin-left: 13px; border-radius: 50%; background: #000; display: flex; align-items: center; justify-content: center; }
.profile-in { width: 26px; height: 26px; border-radius: 50%; background: #0f7fd0; color: #fff; font: 12px/26px "Open Sans", sans-serif; text-align: center; }
.tb-dots { display: flex; flex-direction: column; gap: 4px; margin-left: 23px; }
.tb-dots i { width: 4px; height: 4px; border-radius: 50%; background: #fff; }

/* application */
.app { position: relative; flex: 1; min-height: 0; display: flex; background: #f6f6fa; }
.sidebar { width: 280px; flex: none; padding: 0 20px; display: flex; flex-direction: column; background: linear-gradient(180deg, #4169e1 0, #4169e1 49%, #b565a7 100%); color: #fff; }
.brand { height: 89px; display: flex; align-items: center; padding-left: 7px; font-weight: 900; font-size: 23.5px; letter-spacing: .55px; white-space: nowrap; word-spacing: 3px; border-bottom: 1px solid rgba(255,255,255,.15); }
.nav-item { height: 71px; display: flex; align-items: center; color: rgba(255,255,255,.72); font-size: 17px; border-bottom: 1px solid rgba(255,255,255,.15); position: relative; }
.nav-open { border-bottom: 0; height: 71px; }
.nav-ic { width: 20px; height: 20px; flex: none; margin: 0 11px 0 1px; fill: rgba(255,255,255,.4); }
.nav-chev { width: 15px; height: 16px; margin-left: auto; margin-right: 3px; fill: rgba(255,255,255,.5); }
.submenu { margin-top: 0; height: 202px; background: #fff; border-radius: 6px; margin-bottom: 20px; padding: 10px 0 0 30px; display: flex; flex-direction: column; }
.submenu + .nav-item { border-top: 1px solid rgba(255,255,255,.15); height: 72px; }
.submenu a { height: 45.2px; display: flex; align-items: center; color: #3a3b45; font-size: 17.5px; }
.submenu .sub-active { color: #4e73df; font-weight: 700; }
.collapse { width: 50px; height: 50px; border-radius: 50%; background: rgba(255,255,255,.2); margin: 20px auto 0; display: flex; align-items: center; justify-content: center; fill: rgba(255,255,255,.6); }

.main { flex: 1; min-width: 0; display: flex; flex-direction: column; }
.topbar { height: 89px; flex: none; background: #fff; box-shadow: 0 2px 22px rgba(58,59,69,.16); display: flex; align-items: center; justify-content: flex-end; padding-right: 34px; }
.topbar-sep { width: 1px; height: 48px; background: #dddfe8; margin-right: 35px; }
.content { flex: 1; min-height: 0; padding: 30px 32px 0 30px; }
.page-title { font-size: 35.5px; line-height: 40px; color: #5a5c69; margin-bottom: 13px; white-space: nowrap; }
.card { height: 517px; background: #fff; border: 1px solid #e3e6f0; border-radius: 8px; box-shadow: 0 3px 26px rgba(58,59,69,.12); display: flex; flex-direction: column; }
.card-head { height: 84px; flex: none; background: #f8f9fc; border-bottom: 1px solid #e3e6f0; border-radius: 8px 8px 0 0; display: flex; justify-content: space-between; align-items: flex-start; padding: 18px 23px 0 25px; }
.card-title { font-size: 20.8px; line-height: 24px; font-weight: 700; color: #4169e1; }
.btn-add { height: 44px; width: 222px; margin-top: 1px; background: #007bff; border-radius: 12px; color: #fff; font-size: 20.5px; line-height: 1; padding-bottom: 2px; display: flex; align-items: center; justify-content: center; gap: 12px; }
.btn-add svg { fill: #fff; margin-top: 2px; }
.card-body { flex: 1; padding: 25px 23px 0 25px; color: #858796; font-size: 20.5px; }
.dt-top { display: flex; justify-content: space-between; align-items: center; height: 38px; margin-bottom: 19px; }
.dt-len { display: flex; align-items: flex-start; gap: 6px; line-height: 34px; }
.dt-select { width: 79px; height: 38px; margin: 0 0 0 1px; border: 1px solid #d1d3e2; border-radius: 6px; display: flex; align-items: center; justify-content: space-between; padding: 2px 15px 0 12px; font-size: 18.5px; color: #6e707e; }
.dt-select svg { fill: #3a3b45; }
.dt-search { display: flex; align-items: flex-start; gap: 8px; line-height: 34px; }
.dt-search input { width: 225px; height: 38px; border: 1px solid #d1d3e2; border-radius: 4px; background: #fff; }
.table-wrap { border: 1px solid #e3e6f0; border-top: 0; border-radius: 20px; overflow: hidden; }
.dt { width: 100%; border-collapse: collapse; table-layout: fixed; }
.c1 { width: 347px; } .c2 { width: 740px; }
.dt th { position: relative; height: 61px; padding: 0 23px 0 0; background: none; color: #fff; font-weight: 700; font-size: 21px; text-align: center; border-left: 1px solid #e3e6f0; }
.dt th:first-child, .dt td:first-child { border-left: 0; }
.dt thead tr { background: linear-gradient(90deg, #4169e1, #b565a7); border-bottom: 3px solid #e3e6f0; }
.sort { position: absolute; right: 10px; top: 17px; font-size: 15px; font-weight: 400; letter-spacing: -1px; line-height: 18px; }
.sort i { font-style: normal; opacity: .45; }
.sort b { font-weight: 700; opacity: 1; }
.dt td { height: 68px; text-align: center; vertical-align: top; padding-top: 16px; border-left: 1px solid #e3e6f0; border-top: 1px solid #e3e6f0; line-height: 26px; color: #858796; }
.dt tbody tr:first-child td { border-top: 0; height: 67px; }
.act svg { position: relative; z-index: 12; vertical-align: top; margin-top: 4px; }
.ic-edit { width: 27px; height: 24px; fill: #14733a; margin-right: 26px; }
.ic-trash { width: 20px; height: 24px; fill: #a81f33; }
.dt-bottom { display: flex; justify-content: space-between; margin-top: 11px; }
.dt-info { padding-top: 15px; line-height: 26px; }
.pager { display: flex; height: 47px; border: 1px solid #dddfeb; border-radius: 8px; overflow: hidden; align-items: stretch; line-height: 45px; text-align: center; color: #858796; }
.pg-prev { width: 106px; } .pg-next { width: 73px; }
.pg-num { width: 44px; background: #4e73df; color: #fff; }
.footer { height: 96px; flex: none; text-align: center; color: #858796; font-size: 16.4px; line-height: 1; padding-top: 40px; }

.backdrop { position: absolute; inset: 0; background: rgba(0,0,0,.5); z-index: 10; }
.modal { position: absolute; left: 649px; top: 36px; width: 623px; height: 268px; z-index: 20; background: #fff; border-radius: 6px; overflow: hidden; display: flex; flex-direction: column; }
.modal-head { height: 79px; flex: none; padding: 0 20px; display: flex; align-items: center; justify-content: space-between; background: linear-gradient(90deg, #4169e1, #b565a7); color: #fff; }
.modal-head h3 { font-size: 26px; margin-top: -2px; }
.modal-x { font-size: 36px; font-weight: 900; line-height: 1; margin: -7px 0 0 0; }
.modal-body { height: 102px; flex: none; padding: 20px 50px 0 20px; font-size: 20.5px; line-height: 30.5px; color: #858796; border-bottom: 1px solid #e3e6f0; }
.modal-foot { flex: 1; display: flex; justify-content: flex-end; gap: 11px; padding: 20px 20px 0; }
.modal-foot button { height: 47px; border-radius: 6px; color: #fff; font-size: 21px; }
.btn-cancel { width: 92px; background: #858796; }
.btn-logout { width: 95px; background: #4e73df; }

/* taskbar */
.taskbar { height: 60px; flex: none; display: flex; align-items: center; padding-left: 27px; background: #1c1c1c; border-top: 1px solid #333; color: #fff; font-family: "Open Sans", sans-serif; }
.weather { position: relative; width: 420px; flex: none; display: flex; align-items: center; }
.wx { flex: none; margin-right: 7px; margin-top: 6px; }
.wx-badge { position: absolute; left: 11px; top: -3px; width: 22px; height: 22px; border-radius: 50%; background: #c4201c; font-size: 13px; line-height: 22px; text-align: center; }
.wx-text { display: flex; flex-direction: column; font-size: 14px; line-height: 20px; position: relative; }
.wx-desc { color: #d8d8d8; font-size: 14.5px; }
.winlogo { flex: none; }
.tsearch { width: 272px; height: 38px; margin-left: 17px; border-radius: 19px; background: #f0f0f0; flex: none; display: flex; align-items: center; padding-left: 15px; color: #444; font-size: 16px; }
.tsearch span { margin-left: 13px; }
.guitar { margin-left: auto; margin-right: 5px; }
.apps { display: flex; margin-left: 4px; }
.app-ic { position: relative; width: 55px; height: 58px; display: flex; align-items: center; justify-content: center; margin-top: 1px; }
.app-run::after { content: ""; position: absolute; bottom: 1px; left: 50%; margin-left: -3px; width: 6px; height: 3px; border-radius: 2px; background: #9a9a9a; }
.app-chrome::before { content: ""; position: absolute; left: 5px; right: 6px; top: 4px; bottom: 0; background: #2e2e2e; border-radius: 6px; }
.app-chrome svg { position: relative; }
.app-chrome::after { content: ""; position: absolute; bottom: 2px; left: 17px; width: 20px; height: 3px; border-radius: 2px; background: #d29be8; }
.chrome-j { position: absolute; left: 30px; top: 4px; width: 20px; height: 20px; border-radius: 50%; background: #0f7fd0; font-size: 10px; line-height: 20px; text-align: center; }
.wa-badge { position: absolute; left: 29px; top: 4px; width: 21px; height: 21px; border-radius: 50%; background: #c79be0; color: #111; font-size: 12px; line-height: 21px; text-align: center; }
.pc { font: 700 8.5px "Open Sans", sans-serif; fill: #fff; }
.tray { margin-left: auto; padding-right: 24px; display: flex; align-items: center; font-size: 15px; }
.tray > span { display: flex; align-items: center; justify-content: center; }
.tr-chev { width: 38px; } .tr-sync { width: 40px; }
.tr-lang { width: 58px; margin-right: 4px; flex-direction: column; line-height: 20px; font-size: 14.5px; }
.tr-ic { width: 29px; } .tr-batt { width: 32px; }
.tray .tr-time { width: 76px; flex-direction: column; align-items: flex-end; line-height: 20px; font-size: 14.5px; }
```
